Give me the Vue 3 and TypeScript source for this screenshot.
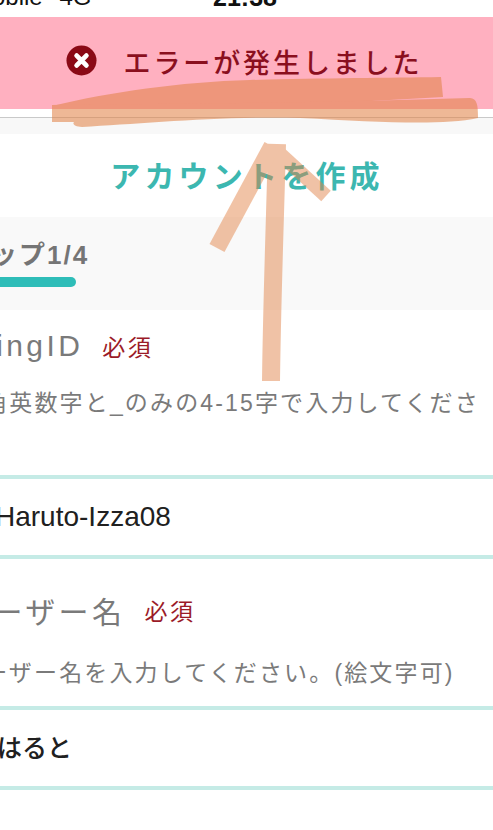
<script setup lang="ts">
interface Field {
  label: string
  help: string
  value: string
  tall: boolean
  latin: boolean
}

const fields: Field[] = [
  { label: 'TwitCastingID', help: '半角英数字と_のみの4-15字で入力してください。', value: 'Haruto-Izza08', tall: true, latin: true },
  { label: 'ユーザー名', help: 'ユーザー名を入力してください。(絵文字可)', value: 'はると', tall: false, latin: false }
]
</script>

<template>
  <div class="screen">
    <div class="page">
      <header class="status">
        <span class="carrier">Mobile <span class="net">4G</span></span>
        <span class="time">21:38</span>
        <span></span>
      </header>

      <section class="banner">
        <svg class="err-icon" viewBox="0 0 32 32" aria-hidden="true">
          <circle cx="16" cy="16" r="15.5" fill="#8a0a16" />
          <path d="M11 11 21 21M21 11 11 21" stroke="#fff" stroke-width="5" stroke-linecap="round" />
        </svg>
        <span class="err-text">エラーが発生しました</span>
      </section>
      <div class="gap-white"></div>
      <div class="gap-grey"></div>

      <h1 class="title">アカウントを作成</h1>

      <section class="steps">
        <div class="step-label">ステップ1/4</div>
        <div class="step-bar"></div>
      </section>

      <div v-for="(field, i) in fields" :key="field.value" class="field" :class="{ second: i === 1 }">
        <div class="label-row" :class="{ shifted: i === 0 }">
          <span class="label">{{ field.label }}</span>
          <span class="required">必須</span>
        </div>
        <p class="help" :class="{ tall: field.tall }">{{ field.help }}</p>
        <div class="input" :class="{ latin: field.latin }">{{ field.value }}</div>
      </div>
    </div>

    <svg class="marker" viewBox="0 0 493 830" aria-hidden="true">
      <g fill="#e18246" opacity="0.56">
        <path d="M52 106C110 92 180 82 250 80 320 78 390 78 441 77L443 97 300 105 52 112Z" />
        <path d="M52 105C150 104 320 103 470 98 477 99 478 104 478 118 440 126 380 122 300 118 220 116 140 124 82 127 75 127 72 124 74 122L52 122Z" />
      </g>
      <g fill="none" stroke="#e18246" opacity="0.48" stroke-linejoin="round">
        <path d="M277 144C275 220 272 300 271 381" stroke-width="18" />
        <path d="M272 146 217 248" stroke-width="17" />
        <path d="M278 152 326 196" stroke-width="14" />
      </g>
    </svg>
  </div>
</template>

<style scoped>
.screen {
  position: relative;
  width: 493px;
  height: 830px;
  overflow: hidden;
  background: #fff;
  font-family: "Liberation Sans", "Noto Sans CJK JP", sans-serif;
}

.page {
  width: 634px;
  margin-left: -70px;
}

.status {
  display: grid;
  grid-template-columns: 1fr auto 1fr;
  height: 17px;
  overflow: hidden;
  padding: 0 42px;
  color: #111;
  font-size: 24px;
  line-height: 20px;
}

.carrier,
.time {
  margin-top: -13px;
  white-space: nowrap;
}

.net {
  margin-left: 10px;
}

.time {
  margin-right: 4px;
  font-weight: 700;
  font-size: 25px;
}

.banner {
  display: flex;
  align-items: center;
  justify-content: center;
  gap: 27px;
  height: 92px;
  padding: 0 6px 5px 0;
  box-sizing: border-box;
  background: #ffb0c0;
}

.err-icon {
  width: 31px;
  height: 31px;
}

.err-text {
  margin-top: 1px;
  color: #8a0f1e;
  font-size: 27px;
  font-weight: 500;
  letter-spacing: 2.9px;
}

.gap-white {
  height: 8px;
  border-bottom: 1px solid #c9c9c9;
}

.gap-grey {
  height: 16px;
  background: #f8f8f8;
}

.title {
  margin: 0;
  height: 83px;
  color: #3cb7b0;
  font-size: 30px;
  font-weight: 700;
  line-height: 86px;
  letter-spacing: 4.2px;
  text-align: center;
}

.steps {
  height: 93px;
  padding: 18px 0 0 5px;
  box-sizing: border-box;
  background: #f9f9f9;
}

.step-label {
  color: #757575;
  font-size: 26px;
  font-weight: 700;
  line-height: 40px;
  letter-spacing: 2px;
  white-space: nowrap;
}

.step-bar {
  width: 138px;
  height: 10px;
  margin: 2px 0 0 3px;
  border-radius: 5px;
  background: #2ebdb8;
}

.field {
  padding-top: 16px;
}

.field.second {
  padding-top: 31px;
}

.label-row {
  display: flex;
  align-items: center;
  gap: 19px;
  height: 40px;
  padding-left: 29px;
  white-space: nowrap;
}

.label-row.shifted {
  margin-left: -105px;
}

.label {
  color: #7a7a7a;
  font-size: 30px;
  letter-spacing: 3.4px;
}

.required {
  color: #9b1b28;
  font-size: 23px;
  letter-spacing: 2.5px;
}

.help {
  margin: 27px 0 0;
  height: 49px;
  padding-left: 29px;
  color: #7a7a7a;
  font-size: 23px;
  line-height: 32px;
  letter-spacing: 2.15px;
  white-space: nowrap;
}

.help.tall {
  width: 535px;
  height: 88px;
  margin-top: 21px;
  white-space: normal;
}

.input {
  height: 76px;
  padding-left: 67px;
  border-top: 4px solid #c5ebe6;
  border-bottom: 4px solid #c5ebe6;
  color: #202020;
  font-size: 25px;
  font-weight: 500;
  line-height: 76px;
}

.input.latin {
  padding-left: 65px;
  font-size: 28px;
}

.marker {
  position: absolute;
  inset: 0;
  width: 493px;
  height: 830px;
  pointer-events: none;
}
</style>
